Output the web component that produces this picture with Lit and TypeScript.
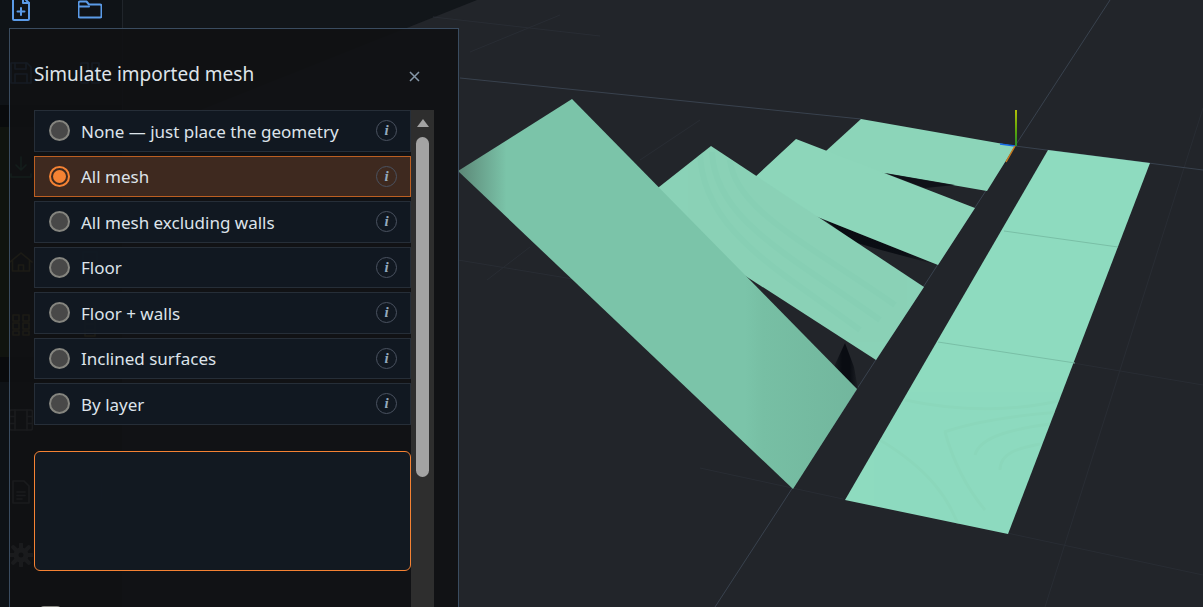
import { LitElement, html, css, svg } from "lit";
import { customElement } from "lit/decorators.js";

const OPTIONS = [
  "None — just place the geometry",
  "All mesh",
  "All mesh excluding walls",
  "Floor",
  "Floor + walls",
  "Inclined surfaces",
  "By layer",
];
const SELECTED = 1;

const tool = (body: unknown, cls = "") => html`<svg class="tool ${cls}" viewBox="0 0 24 24" fill="none" stroke="currentColor" stroke-width="1.6" stroke-linecap="round" stroke-linejoin="round">${body}</svg>`;

const ICONS = [
  tool(svg`<path d="M6 1h9l5 5v16a1 1 0 0 1-1 1H5a1 1 0 0 1-1-1V3a2 2 0 0 1 2-2z"/><path d="M14 1v5h6"/><path d="M12 11v7M8.500 14.500h7"/>`, "blue strong"),
  tool(svg`<path d="M0.500 6a1.500 1.500 0 0 1 1.500-1.500h6.500l2.500 3h11a1.500 1.500 0 0 1 1.500 1.500v10a1.500 1.500 0 0 1-1.500 1.500H2A1.500 1.500 0 0 1 .5 19z"/><path d="M1 9.500h10"/>`, "blue strong"),
  tool(svg`<path d="M2 2h16l4 4v16H2z"/><path d="M6 2v6h11V2M6 22v-9h12v9"/>`, "blue"),
  tool(svg`<rect x="3" y="2" width="7" height="20"/><rect x="14" y="2" width="7" height="20"/>`, "blue"),
  tool(svg`<path d="M12 2v13M7 10l5 5 5-5M2 19v3h20v-3"/>`, "green"),
  tool(svg`<path d="M12 16V3M7 8l5-5 5 5M2 19v3h20v-3"/>`, "grey"),
  tool(svg`<path d="M1 12 12 3l11 9M3.500 10v11h17V10M9.500 21v-6h5v6"/>`, "amber"),
  tool(svg`<rect x="5" y="2" width="14" height="18"/>`, "blue"),
  tool(svg`<rect x="4" y="2" width="6" height="6"/><rect x="14" y="2" width="6" height="6"/><rect x="4" y="10" width="6" height="6"/><rect x="14" y="10" width="6" height="6"/><rect x="4" y="18" width="6" height="4"/><rect x="14" y="18" width="6" height="4"/>`, "amber"),
  tool(svg`<rect x="7" y="5" width="10" height="18"/><path d="M7 11h10M7 17h10"/>`, "amber"),
  tool(svg`<rect x="0.500" y="2" width="23" height="20" rx="2"/><path d="M6 2v20M18 2v20M1 8.500h5M1 15.500h5M18 8.500h5M18 15.500h5"/>`, "grey"),
  html`<span></span>`,
  tool(svg`<path d="M4 1h11l5 5v17H4z"/><path d="M8 12h8M8 15.500h8M8 19h5"/>`, "grey"),
  tool(svg`<rect x="0.500" y="4" width="23" height="16" rx="1"/><path d="M12 11v2"/>`, "grey"),
  tool(svg`<circle cx="12" cy="12" r="5" stroke-width="5"/><path d="M12 1v4M12 19v4M1 12h4M19 12h4M4.200 4.200l2.800 2.800M17 17l2.800 2.800M4.200 19.800 7 17M17 7l2.800-2.800" stroke-width="4"/>`, "grey"),
];

function canvasScene() {
  return svg`
    <defs>
      <linearGradient id="stripA" gradientUnits="userSpaceOnUse" x1="456" y1="0" x2="860" y2="0">
        <stop offset="0" stop-color="#5a8474"/>
        <stop offset="0.125" stop-color="#7bc4a9"/>
        <stop offset="0.715" stop-color="#7bc4a9"/>
        <stop offset="0.76" stop-color="#77bfa4"/>
        <stop offset="1" stop-color="#72b69d"/>
      </linearGradient>
      <linearGradient id="spike" gradientUnits="userSpaceOnUse" x1="830" y1="0" x2="860" y2="0">
        <stop offset="0" stop-color="#22252a"/><stop offset="0.4" stop-color="#090c12"/><stop offset="0.65" stop-color="#090c12"/><stop offset="1" stop-color="#22252a"/>
      </linearGradient>
      <linearGradient id="sliver" gradientUnits="userSpaceOnUse" x1="825" y1="220" x2="940" y2="265">
        <stop offset="0" stop-color="#090c12"/><stop offset="0.7" stop-color="#0b0e14"/><stop offset="1" stop-color="#22252a"/>
      </linearGradient>
      <linearGradient id="axisY" gradientUnits="userSpaceOnUse" x1="0" y1="110" x2="0" y2="146">
        <stop offset="0" stop-color="#d6e600"/><stop offset="0.55" stop-color="#6fc800"/><stop offset="1" stop-color="#27a52a"/>
      </linearGradient>
      <clipPath id="clipE"><polygon points="1048,150 1150,163 1008,534 845,500"/></clipPath>
      <clipPath id="clipB"><polygon points="640,202 711,146 924,287 876,360 730,266"/></clipPath>
    </defs>

    <polygon points="123,0 477,0 123,141" fill="#12161a"/>

    <g fill="none" stroke-width="1">
      <g stroke="#292d34">
        <path d="M700 468 843 499M1007 533 1203 575M1073 363 1203 385"/>
        <path d="M1203 108 1045 607"/>
        <path d="M458 260 700 300M530 247 487 280"/>
        <path d="M700 120 640 160M433 17 600 36M470 52 560 15"/>
      </g>
      <g stroke="#39424e">
        <path d="M460 78 861 119M1015 146 1203 170"/>
        <path d="M1110 0 1015 146 715 607"/>
      </g>
    </g>

    <polygon points="815,161 861,119 1015,146 987,191 860,169" fill="#8cd5b9"/>
    <polygon points="885,173 955,185 925,188" fill="#0d1016" opacity="0.9"/>
    <polygon points="825,220 854,242 881,250 930,263 938,265" fill="url(#sliver)"/>
    <polygon points="735,195.500 796,139 975,208 938,265 800,210" fill="#8dd6ba"/>
    <polygon points="845,343 832,371 858,389 854,367" fill="url(#spike)"/>
    <polygon points="640,202 711,146 924,287 876,360 730,266" fill="#8ad2b7"/>
    <g clip-path="url(#clipB)" fill="none" stroke="#82caaf" stroke-width="6" opacity="0.3">
      <path d="M700 150 C700 230 780 270 860 330"/>
      <path d="M712 152 C715 220 790 255 880 320"/>
      <path d="M730 160 C735 210 810 245 895 305"/>
    </g>
    <polygon points="458,171 572,99 857,389 793,489" fill="url(#stripA)"/>

    <polygon points="1048,150 1150,163 1008,534 845,500" fill="#8edbbf"/>
    <g clip-path="url(#clipE)" fill="none" stroke="#86d1b6" stroke-width="3" opacity="0.35">
      <path d="M945 432 C950 450 960 480 985 510"/>
      <path d="M944 432 C980 420 1020 415 1060 412"/>
      <path d="M975 455 C980 435 1020 428 1050 424"/>
      <path d="M1000 470 C1000 452 1020 448 1040 444"/>
      <path d="M880 440 C930 470 950 500 960 530"/>
      <path d="M905 400 C960 412 1020 412 1070 398"/>
    </g>
    <path d="M1004 231 1118 247M938 342 1075 363" stroke="#79bfa6" stroke-width="1" fill="none"/>

    <line x1="1016" y1="110" x2="1016" y2="146" stroke="url(#axisY)" stroke-width="1.600"/>
    <line x1="1000" y1="144" x2="1015" y2="146" stroke="#1368e8" stroke-width="1.300"/>
    <line x1="1015" y1="146" x2="1006" y2="162" stroke="#c97a20" stroke-width="1.500"/>
  `;
}

@customElement("app-root")
export class AppRoot extends LitElement {
  static styles = css`
    :host {
      display: block;
      position: relative;
      width: 1203px;
      height: 607px;
      overflow: hidden;
      background: #22252a;
      font-family: "Noto Sans", "Open Sans", sans-serif;
    }
    .stage {
      display: grid;
      grid-template-columns: 123px 1fr;
      height: 607px;
    }
    .sidebar {
      display: grid;
      grid-template-columns: 24px 24px;
      column-gap: 45px;
      grid-template-rows: 64px 94px 95px 63px 95px 72px 63px 40px;
      align-content: start;
      padding: 0 0 0 9px;
      box-sizing: border-box;
      border-right: 1px solid #20252b;
      height: 610px;
      margin-top: -3px;
      background: linear-gradient(
        180deg,
        #0f1317 0,
        #0f1317 108px,
        #090b0d 108px,
        #090b0d 130px,
        #10140f 130px,
        #10140f 360px,
        #090b0d 360px,
        #090b0d 385px,
        #0e1216 385px
      );
    }
    .tool { width: 24px; height: 24px; }
    .tool.blue { color: #5b9be8; }
    .tool.green { color: #3fb27f; }
    .tool.amber { color: #b59a30; }
    .tool.grey { color: #9a9a9a; }
    .tool.strong { stroke-width: 2; }
    .viewport {
      display: block;
      width: 1080px;
      height: 607px;
    }
    .panel {
      position: absolute;
      left: 9px;
      top: 28px;
      width: 450px;
      height: 640px;
      box-sizing: border-box;
      border: 1px solid #3a4c60;
      background: rgba(16, 17, 19, 0.93);
      display: flex;
      flex-direction: column;
      padding-left: 24px;
    }
    .head {
      display: flex;
      align-items: center;
      justify-content: space-between;
      height: 81px;
      flex: none;
    }
    .title {
      margin: 0;
      font-size: 19px;
      font-weight: 400;
      color: #dfe4ea;
      padding-top: 9px;
    }
    .close {
      display: flex;
      border: 0;
      background: none;
      padding: 0;
      margin-top: 13px;
      margin-right: 38px;
      color: #8698a9;
      width: 11px;
      height: 11px;
    }
    .body {
      display: flex;
      flex: 1;
      min-height: 0;
    }
    .content {
      width: 377px;
      flex: none;
      display: flex;
      flex-direction: column;
    }
    .options {
      display: flex;
      flex-direction: column;
      gap: 4px;
    }
    .row {
      display: flex;
      align-items: center;
      height: 41.5px;
      box-sizing: border-box;
      border: 1px solid #262e38;
      background: rgba(18, 25, 34, 0.96);
      padding: 0 13px 0 14px;
      font-size: 17px;
      color: #dde3ea;
    }
    .row.on {
      background: #3e291f;
      border-color: #bc5f22;
    }
    .radio {
      width: 21px;
      height: 21px;
      box-sizing: border-box;
      border: 2px solid #85857f;
      border-radius: 50%;
      background: #484848;
      flex: none;
      margin-right: 11px;
      display: flex;
      align-items: center;
      justify-content: center;
    }
    .row.on .radio {
      border-color: #f58233;
      background: transparent;
    }
    .row.on .radio::after {
      content: "";
      width: 13px;
      height: 13px;
      border-radius: 50%;
      background: #f58233;
    }
    .label { flex: 1; padding-top: 1px; }
    .info {
      width: 21px;
      height: 21px;
      box-sizing: border-box;
      border: 1px solid #4a5260;
      border-radius: 50%;
      display: flex;
      align-items: center;
      justify-content: center;
      font: italic 700 15px "Liberation Serif", serif;
      color: #94a9bd;
      flex: none;
    }
    textarea {
      display: block;
      margin: 26px 0 0;
      width: 377px;
      height: 120px;
      box-sizing: border-box;
      border: 1px solid #f58233;
      border-radius: 6px;
      background: rgba(19, 26, 34, 0.97);
      resize: none;
      outline: none;
      padding: 8px;
      color: #dde3ea;
    }
    .check {
      margin: 35px 0 0 6px;
      width: 21px;
      height: 21px;
      box-sizing: border-box;
      border: 2px solid #85857f;
      border-radius: 4px;
      background: #484848;
      flex: none;
    }
    .scrollbar {
      width: 23px;
      flex: none;
      background: #2e2e2e;
    }
    .arrow {
      width: 0;
      height: 0;
      margin: 9px auto 0;
      border-left: 6px solid transparent;
      border-right: 6px solid transparent;
      border-bottom: 8px solid #a3a3a3;
    }
    .thumb {
      width: 13px;
      height: 340px;
      margin: 10px auto 0;
      border-radius: 7px;
      background: #a3a3a3;
    }
  `;

  render() {
    return html`
      <div class="stage">
        <nav class="sidebar">${ICONS}</nav>
        <svg class="viewport" viewBox="123 0 1080 607">${canvasScene()}</svg>
      </div>
      <section class="panel">
        <header class="head">
          <h2 class="title">Simulate imported mesh</h2>
          <button class="close" aria-label="Close">
            <svg viewBox="0 0 11 11" width="11" height="11" stroke="currentColor" stroke-width="1.500" fill="none"><path d="M1 1l9 9M10 1l-9 9"/></svg>
          </button>
        </header>
        <div class="body">
          <div class="content">
            <div class="options">
              ${OPTIONS.map(
                (o, i) => html`<div class="row ${i === SELECTED ? "on" : ""}">
                  <span class="radio"></span>
                  <span class="label">${o}</span>
                  <span class="info">i</span>
                </div>`
              )}
            </div>
            <textarea></textarea>
            <div class="check"></div>
          </div>
          <div class="scrollbar">
            <div class="arrow"></div>
            <div class="thumb"></div>
          </div>
        </div>
      </section>
    `;
  }
}
